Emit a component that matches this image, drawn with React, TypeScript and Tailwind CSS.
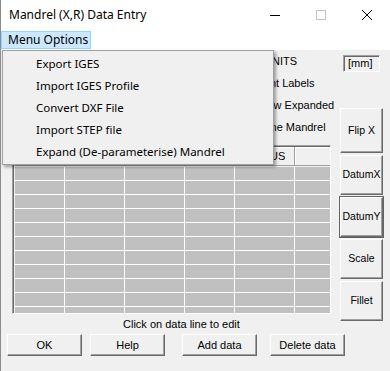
import React from "react";

const ui = "font-['Segoe_UI','Noto_Sans',sans-serif]";
const classic = "font-['Microsoft_Sans_Serif','Liberation_Sans',Arial,sans-serif]";

const menuItems = [
  "Export IGES",
  "Import IGES Profile",
  "Convert DXF File",
  "Import STEP file",
  "Expand (De-parameterise) Mandrel",
];

const cols = [50, 60, 60, 50, 60, 36];
// only the last headers show past the open menu
const headers = ["", "", "", "", "RADIUS", ""];

function Btn({ label, className = "", focused = false }: { label: string; className?: string; focused?: boolean }) {
  return (
    <button
      className={
        "flex items-center justify-center px-0 whitespace-nowrap bg-[#f0f0f0] text-[10.5px] text-black border border-t-white border-l-white border-r-[#696969] border-b-[#696969] shadow-[inset_-1px_-1px_0_#a0a0a0] " +
        (focused ? "outline outline-1 outline-[#646464] " : "") +
        className
      }
    >
      {label}
    </button>
  );
}

export default function App() {
  return (
    <div className={`relative w-[390px] h-[371px] overflow-hidden bg-[#f0f0f0] border-l border-[#8c8c8c] ${classic}`}>
      {/* Title bar */}
      <div className={`h-[30px] bg-white flex items-center ${ui}`}>
        <span className="pl-[8px] text-[12px] text-black">Mandrel (X,R) Data Entry</span>
        <div className="ml-auto flex items-center h-full">
          <div className="w-[46px] h-full flex items-center justify-center">
            <svg width="10" height="10" viewBox="0 0 10 10">
              <line x1="0" y1="5.5" x2="10" y2="5.5" stroke="#000" strokeWidth="1" />
            </svg>
          </div>
          <div className="w-[46px] h-full flex items-center justify-center">
            <svg width="10" height="10" viewBox="0 0 10 10">
              <rect x="0.5" y="0.5" width="9" height="9" fill="none" stroke="#c4c4c4" strokeWidth="1" />
            </svg>
          </div>
          <div className="w-[46px] h-full flex items-center justify-center">
            <svg width="10" height="10" viewBox="0 0 10 10">
              <path d="M0 0 L10 10 M10 0 L0 10" stroke="#000" strokeWidth="1" />
            </svg>
          </div>
        </div>
      </div>

      {/* Menu bar */}
      <div className={`h-[20px] bg-white flex items-start ${ui}`}>
        <div className="mt-[1px] h-[18px] w-[90px] bg-[#cce8ff] border border-[#99d1ff] flex items-center pl-[6px] text-[12px] text-black whitespace-nowrap">
          Menu Options
        </div>
      </div>

      {/* Client area */}
      <div className="flex">
        <div className="w-[330px] flex flex-col whitespace-nowrap">
          <div className="h-[22px] flex items-center pl-[263px] text-[11px]">UNITS</div>
          <div className="h-[22px] flex items-center pl-[253px] text-[11px]">Point Labels</div>
          <div className="h-[22px] flex items-center pl-[253px] text-[11px]">Show Expanded</div>
          <div className="h-[22px] flex items-center pl-[250px] text-[11px]">Define Mandrel</div>

          {/* Data grid */}
          <div className="ml-[11px] mt-[7px] w-[319px] h-[169px] border border-l-[#a0a0a0] border-t-[#a0a0a0] border-r-white border-b-white overflow-hidden">
            <div className="h-[169px] border-l border-t border-[#696969] pl-[1px]">
              <div className="flex h-[19px] border-b border-[#a0a0a0] bg-[#f0f0f0]">
                {cols.map((w, i) => (
                  <div
                    key={i}
                    style={{ width: w }}
                    className="shrink-0 flex items-center justify-center text-[11px] border-r border-[#a0a0a0] shadow-[inset_1px_1px_0_#fff]"
                  >
                    {headers[i]}
                  </div>
                ))}
              </div>
              <div className="mt-[1px]">
                {Array.from({ length: 11 }).map((_, r) => (
                  <div key={r} className="flex h-[14px] border-b border-white">
                    {cols.map((w, i) => (
                      <div key={i} style={{ width: w }} className="shrink-0 bg-[#c0c0c0] border-r border-white" />
                    ))}
                  </div>
                ))}
              </div>
            </div>
          </div>

          <div className="mt-[3px] h-[14px] flex items-center pl-[122px] text-[11px]">Click on data line to edit</div>
        </div>

        {/* Right buttons */}
        <div className="ml-[9px] w-[43px] flex flex-col pt-[5px]">
          <div className="ml-[3px] w-[37px] h-[17px] flex items-center pl-[4px] text-[11px] border border-t-[#a0a0a0] border-l-[#a0a0a0] border-r-white border-b-white shadow-[inset_1px_1px_0_#696969]">
            [mm]
          </div>
          <Btn label="Flip X" className="mt-[36px] h-[45px] w-[43px]" />
          <Btn label="DatumX" className="mt-[2px] h-[40px] w-[43px]" />
          <Btn label="DatumY" focused className="mt-[2px] h-[40px] w-[43px]" />
          <Btn label="Scale" className="mt-[2px] h-[40px] w-[43px]" />
          <Btn label="Fillet" className="mt-[2px] h-[40px] w-[43px]" />
        </div>
      </div>

      {/* Bottom buttons */}
      <div className="mt-[3px] flex pl-[6px]">
        <Btn label="OK" className="w-[75px] h-[22px] text-[11px]" />
        <Btn label="Help" className="ml-[8px] w-[75px] h-[22px] text-[11px]" />
        <Btn label="Add data" className="ml-[17px] w-[75px] h-[22px] text-[11px]" />
        <Btn label="Delete data" className="ml-[13px] w-[75px] h-[22px] text-[11px]" />
      </div>

      {/* Dropdown menu */}
      <div className={`absolute left-[1px] top-[50px] w-[272px] h-[115px] bg-[#f0f0f0] border border-[#a0a0a0] shadow-[2px_2px_3px_rgba(0,0,0,0.35)] pt-[2px] ${ui}`}>
        {menuItems.map((m) => (
          <div key={m} className="h-[22px] flex items-center pl-[33px] text-[11.5px] text-black whitespace-nowrap">
            {m}
          </div>
        ))}
      </div>
    </div>
  );
}
